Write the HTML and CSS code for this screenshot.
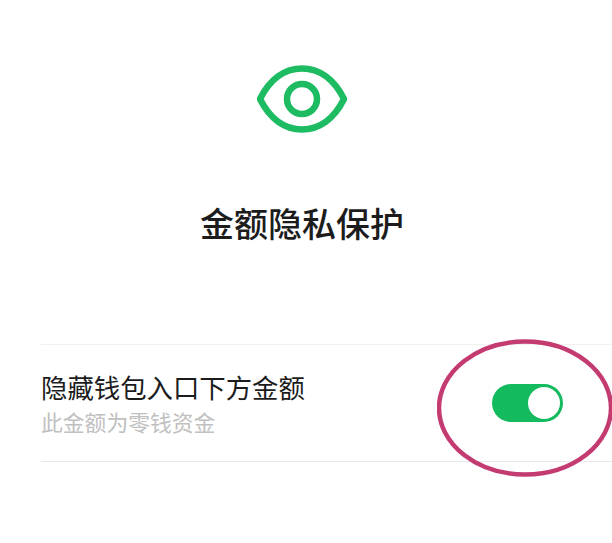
FILE: index.html
```html
<!DOCTYPE html>
<html>

<head>
  <meta charset='utf-8'>
  <title>金额隐私保护</title>
  <link rel="stylesheet" href="styles.css">
</head>

<body>
  <div class='page'>
    <svg class='eye-icon' viewBox='0 0 90 68' width='90' height='68'>
      <path d='M3 34 C13 14 28 3.5 45 3.5 C62 3.5 77 14 87 34 C77 54 62 64.5 45 64.5 C28 64.5 13 54 3 34 Z' fill='none' stroke='#1dbb62' stroke-width='6.5' stroke-linejoin='round'/>
      <circle cx='45' cy='34' r='15' fill='none' stroke='#1dbb62' stroke-width='6.5'/>
    </svg>
    <h1>金额隐私保护</h1>
    <div class='setting-row'>
      <div class='setting-text'>
        <div class='setting-label'>隐藏钱包入口下方金额</div>
        <div class='setting-note'>此金额为零钱资金</div>
      </div>
      <div class='switch'>
        <div class='knob'></div>
      </div>
      <svg class='circle-mark' viewBox='0 0 176 138' width='176' height='138'>
        <ellipse cx='88' cy='69' rx='86' ry='66.5' fill='none' stroke='#c43b72' stroke-width='4.5'/>
      </svg>
    </div>
  </div>
</body>

</html>
```

FILE: styles.css
```css
html,
body {
  margin: 0;
  padding: 0;
  background-color: #fff;
}

body {
  font-family: "Liberation Sans", "Noto Sans CJK SC", sans-serif;
  overflow: hidden;
}

.page {
  display: flex;
  flex-direction: column;
  align-items: center;
  height: 543px;
  padding-top: 65px;
  padding-left: 41px;
  box-sizing: border-box;
}

.eye-icon {
  display: block;
  margin-left: -50px;
}

h1 {
  margin: 68px 0 0 -49px;
  font-size: 34px;
  line-height: 48px;
  font-weight: 500;
  color: #1c1c1c;
}

.setting-row {
  position: relative;
  display: flex;
  align-items: center;
  justify-content: space-between;
  align-self: stretch;
  height: 118px;
  margin-top: 95px;
  padding-right: 49px;
  border-top: 1px solid #f1f1f1;
  border-bottom: 1px solid #e8e8e8;
  box-sizing: border-box;
}

.setting-text {
  margin-top: 3px;
}

.setting-label {
  font-size: 26.4px;
  line-height: 36px;
  color: #1c1c1c;
}

.setting-note {
  margin-top: 2px;
  font-size: 21.8px;
  line-height: 30px;
  color: #c0c0c0;
}

.switch {
  display: flex;
  align-items: center;
  justify-content: flex-end;
  width: 71px;
  height: 38px;
  padding-right: 3px;
  border-radius: 19px;
  background-color: #14ba5e;
  box-sizing: border-box;
}

.knob {
  width: 32px;
  height: 32px;
  border-radius: 50%;
  background-color: #fff;
}

.circle-mark {
  position: absolute;
  top: -6px;
  right: -1px;
}
```
